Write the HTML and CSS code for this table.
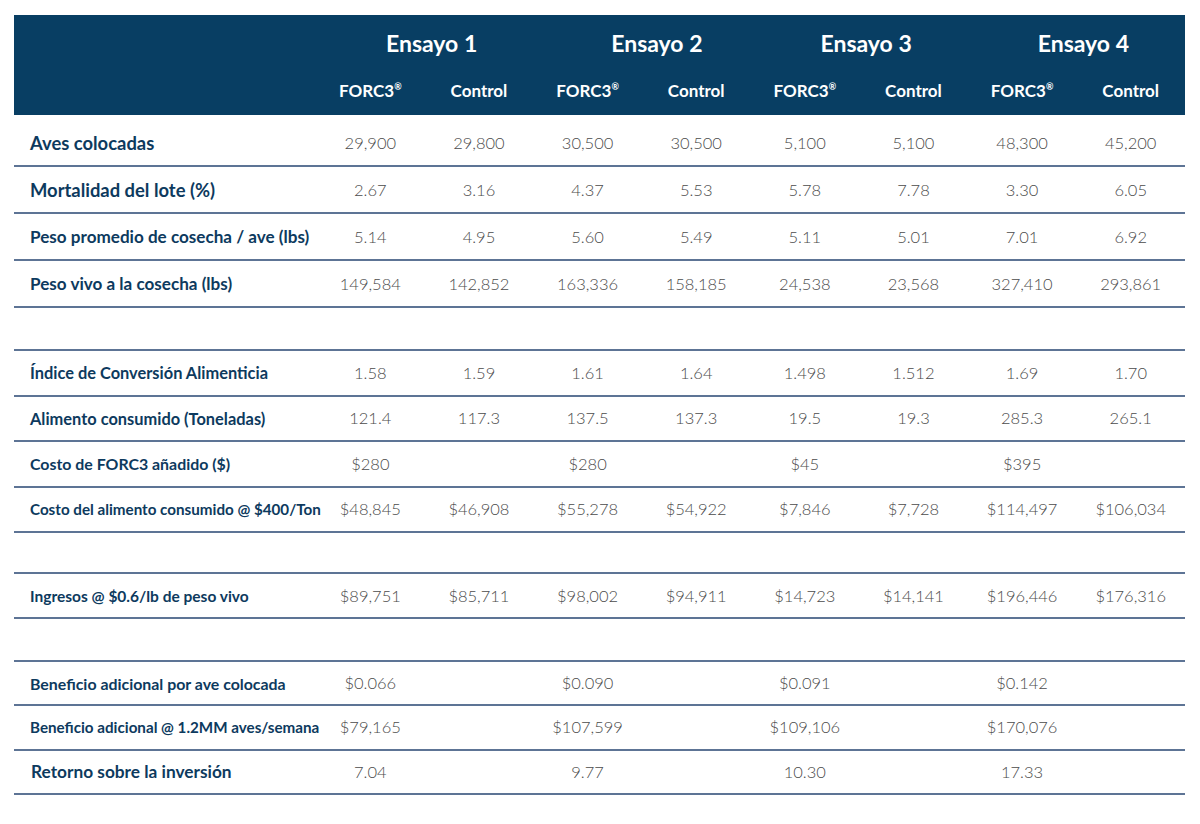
FILE: index.html
```html
<!DOCTYPE html>
<html lang="es">
<head>
    <meta charset="UTF-8">
    <meta name="viewport" content="width=device-width, initial-scale=1.0">
    <title>Ensayos FORC3</title>
    <link rel="stylesheet" href="styles.css">
</head>
<body>
    <table class="tabla">
        <colgroup>
            <col class="col-label">
            <col span="8" class="col-num">
        </colgroup>
        <thead>
            <tr class="fila-ensayo">
                <th></th>
                <th colspan="2">Ensayo 1</th>
                <th colspan="2" class="ensayo-2">Ensayo 2</th>
                <th colspan="2">Ensayo 3</th>
                <th colspan="2">Ensayo 4</th>
            </tr>
            <tr class="fila-sub">
                <th></th>
                <th>FORC3<sup>®</sup></th>
                <th>Control</th>
                <th>FORC3<sup>®</sup></th>
                <th>Control</th>
                <th>FORC3<sup>®</sup></th>
                <th>Control</th>
                <th>FORC3<sup>®</sup></th>
                <th>Control</th>
            </tr>
        </thead>
        <tbody>
            <tr class="g1 primera">
                <td class="l18">Aves colocadas</td>
                <td>29,900</td><td>29,800</td><td>30,500</td><td>30,500</td>
                <td>5,100</td><td>5,100</td><td>48,300</td><td>45,200</td>
            </tr>
            <tr class="g1">
                <td class="l18">Mortalidad del lote (%)</td>
                <td>2.67</td><td>3.16</td><td>4.37</td><td>5.53</td>
                <td>5.78</td><td>7.78</td><td>3.30</td><td>6.05</td>
            </tr>
            <tr class="g1">
                <td class="l17">Peso promedio de cosecha / ave (lbs)</td>
                <td>5.14</td><td>4.95</td><td>5.60</td><td>5.49</td>
                <td>5.11</td><td>5.01</td><td>7.01</td><td>6.92</td>
            </tr>
            <tr class="g1">
                <td class="l17">Peso vivo a la cosecha (lbs)</td>
                <td>149,584</td><td>142,852</td><td>163,336</td><td>158,185</td>
                <td>24,538</td><td>23,568</td><td>327,410</td><td>293,861</td>
            </tr>
            <tr class="espacio"><td colspan="9"></td></tr>
            <tr class="g2">
                <td class="l16">Índice de Conversión Alimenticia</td>
                <td>1.58</td><td>1.59</td><td>1.61</td><td>1.64</td>
                <td>1.498</td><td>1.512</td><td>1.69</td><td>1.70</td>
            </tr>
            <tr class="g2">
                <td class="l16">Alimento consumido (Toneladas)</td>
                <td>121.4</td><td>117.3</td><td>137.5</td><td>137.3</td>
                <td>19.5</td><td>19.3</td><td>285.3</td><td>265.1</td>
            </tr>
            <tr class="g2">
                <td class="l15">Costo de FORC3 añadido ($)</td>
                <td>$280</td><td></td><td>$280</td><td></td>
                <td>$45</td><td></td><td>$395</td><td></td>
            </tr>
            <tr class="g2">
                <td class="l15 estrecho">Costo del alimento consumido @ $400/Ton</td>
                <td>$48,845</td><td>$46,908</td><td>$55,278</td><td>$54,922</td>
                <td>$7,846</td><td>$7,728</td><td>$114,497</td><td>$106,034</td>
            </tr>
            <tr class="espacio corto"><td colspan="9"></td></tr>
            <tr class="g3">
                <td class="l15 ingresos">Ingresos @ $0.6/lb de peso vivo</td>
                <td>$89,751</td><td>$85,711</td><td>$98,002</td><td>$94,911</td>
                <td>$14,723</td><td>$14,141</td><td>$196,446</td><td>$176,316</td>
            </tr>
            <tr class="espacio"><td colspan="9"></td></tr>
            <tr class="g4">
                <td class="l15">Beneficio adicional por ave colocada</td>
                <td>$0.066</td><td></td><td>$0.090</td><td></td>
                <td>$0.091</td><td></td><td>$0.142</td><td></td>
            </tr>
            <tr class="g4">
                <td class="l15 estrecho">Beneficio adicional @ 1.2MM aves/semana</td>
                <td>$79,165</td><td></td><td>$107,599</td><td></td>
                <td>$109,106</td><td></td><td>$170,076</td><td></td>
            </tr>
            <tr class="g4">
                <td class="l17 retorno">Retorno sobre la inversión</td>
                <td>7.04</td><td></td><td>9.77</td><td></td>
                <td>10.30</td><td></td><td>17.33</td><td></td>
            </tr>
        </tbody>
    </table>
</body>
</html>
```

FILE: styles.css
```css
body {
    margin: 0;
    background-color: white;
    font-family: Lato, "Open Sans", sans-serif;
}

table.tabla {
    margin: 15px 0 0 14px;
    width: 1171px;
    border-collapse: collapse;
    table-layout: fixed;
}

col.col-label {
    width: 302px;
}

thead {
    background-color: #083e63;
    color: white;
}

thead th {
    font-weight: 700;
    padding: 0;
}

tr.fila-ensayo th {
    height: 51px;
    font-size: 23px;
    padding-left: 14px;
    padding-top: 2px;
}

tr.fila-ensayo th.ensayo-2 {
    padding-left: 30px;
}

tr.fila-sub th {
    height: 45px;
    font-size: 17px;
    padding-bottom: 2px;
}

tr.fila-sub sup {
    font-size: 9px;
    vertical-align: 7px;
}

tbody td {
    height: 45px;
    padding: 0;
    border-bottom: 2px solid #5d7495;
    text-align: center;
    font-size: 16.5px;
    font-weight: 300;
    color: #4b4b4b;
    white-space: nowrap;
}

tbody td:first-child {
    text-align: left;
    padding-left: 16px;
    font-weight: 700;
    color: #0d3a5e;
}

tbody td.l18 {
    font-size: 18.4px;
}

tbody td.l17 {
    font-size: 17.1px;
}

tbody td.l16 {
    font-size: 16.4px;
}

tbody td.l15 {
    font-size: 15.9px;
}

tbody td.l15.ingresos {
    font-size: 15.5px;
}

tbody td.l15.estrecho {
    font-size: 15.2px;
}

tbody td.retorno {
    font-size: 17.3px;
    padding-left: 17px;
}

tr.primera td {
    height: 45px;
    padding-top: 5px;
}

tr.g2 td {
    height: 43.5px;
}

tr.g3 td {
    height: 43px;
}

tr.g4 td {
    height: 42.3px;
}

tr.espacio td {
    height: 41px;
}

tr.espacio.corto td {
    height: 39px;
}
```
